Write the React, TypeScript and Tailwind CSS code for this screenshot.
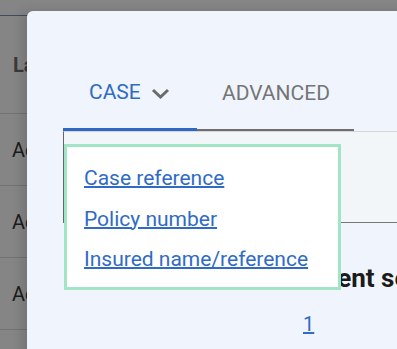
const links = ["Case reference", "Policy number", "Insured name/reference"];

export default function App() {
  return (
    <div className="relative h-[349px] w-[397px] overflow-hidden bg-[#858585] font-['Roboto',sans-serif]">
      {/* page behind the overlay */}
      <div className="pt-[15px] text-[#1c1c1c]">
        <div className="flex h-[98px] items-center border-t border-[#3f4b5e] pl-[13px] text-[20px] font-bold text-[#3a3a3a]">
          Last
        </div>
        {[0, 1, 2].map((i) => (
          <div
            key={i}
            className="flex h-[72px] items-center border-t border-[#727272] pl-[12px] text-[20px]"
          >
            Action
          </div>
        ))}
        <div className="h-[10px] border-t border-[#727272]" />
      </div>

      {/* modal */}
      <div className="absolute left-[27px] top-[11px] h-[360px] w-[400px] rounded-tl-[6px] bg-[#f0f5fd] pt-[47px] pl-[36px] shadow-[-6px_0_10px_rgba(0,0,0,0.12)]">
        <div className="flex items-end">
          <button className="flex h-[73px] w-[134px] items-center gap-[10px] border-b-[3px] border-[#2f68c4] pl-[26px] text-[21px] text-[#2f6bc6]">
            CASE
            <svg width="19" height="11" viewBox="0 0 19 11" className="mt-[1px]">
              <polyline
                points="2,2 9.5,9 17,2"
                fill="none"
                stroke="#6b6b6b"
                strokeWidth="3"
              />
            </svg>
          </button>
          <button className="flex h-[72px] w-[157px] items-center border-b-2 border-[#6e6e6e] pl-[25px] text-[21px] text-[#757575]">
            ADVANCED
          </button>
        </div>

        <div className="h-[92px] border-t border-b border-l border-t-[#d4d6d8] border-b-[#777777] border-l-[#666666] bg-[#f3f6f9]" />

        <h2 className="mt-[38px] pl-[230px] text-[26px] leading-[34px] font-bold whitespace-nowrap text-[#1b1b1b]">
          Recent searches
        </h2>
        <a className="mt-[15px] block pl-[240px] text-[20px] leading-[28px] text-[#2f6bc6] underline">
          1
        </a>

        {/* dropdown menu */}
        <div className="absolute left-[37px] top-[133px] h-[146px] w-[277px] border-[3px] border-[#a2e5c6] bg-white pl-[17px] pt-[12px]">
          {links.map((l) => (
            <div key={l} className="leading-[38.5px]">
              <a className="text-[21px] text-[#2f6bc6] underline decoration-2">
                {l}
              </a>
            </div>
          ))}
        </div>
      </div>
    </div>
  );
}
